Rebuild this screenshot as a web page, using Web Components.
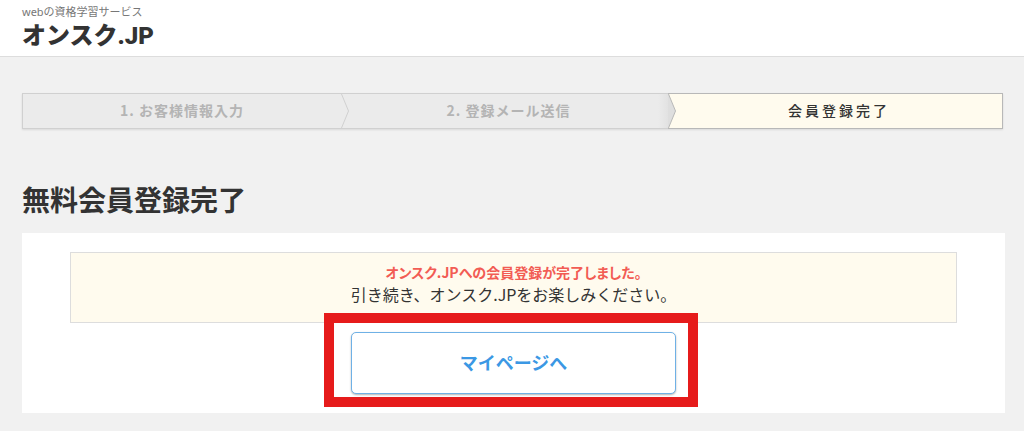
<!DOCTYPE html>
<html lang="ja">
<head>
<meta charset="utf-8">
<meta name="viewport" content="width=device-width, initial-scale=1">
<title>無料会員登録完了 | オンスク.JP</title>
<style>
    body {
        margin: 0;
        background: #f1f1f1;
        color: #333;
        font-family: "Noto Sans CJK JP", "Noto Sans", sans-serif;
        font-size: 16px;
        line-height: 22px;
    }
    main {
        padding: 36px 19px 18px 22px;
    }
    h1 {
        margin: 50px 0 14px;
        font-size: 28px;
        line-height: 40px;
        font-weight: 700;
    }
</style>
</head>
<body>
<site-header href="#top">
    <span slot="tagline">webの資格学習サービス</span>
    オンスク.JP
</site-header>
<main>
    <step-list>
        <step-item next="done">1. お客様情報入力</step-item>
        <step-item next="active">2. 登録メール送信</step-item>
        <step-item state="active">会員登録完了</step-item>
    </step-list>
    <h1>無料会員登録完了</h1>
    <content-panel>
        <notice-box>
            <span slot="title">オンスク.JPへの会員登録が完了しました。</span>
            引き続き、オンスク.JPをお楽しみください。
        </notice-box>
        <link-button href="#mypage" marked>マイページへ</link-button>
    </content-panel>
</main>

<script>
class SiteHeader extends HTMLElement {
    constructor() {
        super();
        this.attachShadow({ mode: 'open' });
    }

    connectedCallback() {
        this.shadowRoot.innerHTML = `
        <style>
            :host {
                display: block;
                background: #fff;
                border-bottom: 1px solid #ddd;
            }
            header {
                padding: 4px 22px 6px;
            }
            .tagline {
                font-family: "Noto Sans", "Noto Sans CJK JP", sans-serif;
                font-size: 11px;
                line-height: 16px;
                color: #777;
            }
            .logo {
                display: block;
                width: fit-content;
                padding-top: 2px;
                font-family: Roboto, "Noto Sans CJK JP", sans-serif;
                font-size: 24px;
                line-height: 28px;
                font-weight: 900;
                color: #333;
                text-decoration: none;
            }
        </style>
        <header>
            <div class="tagline"><slot name="tagline"></slot></div>
            <a class="logo" href="${this.getAttribute('href') || '#'}"><slot></slot></a>
        </header>`;
    }
}

class StepList extends HTMLElement {
    constructor() {
        super();
        this.attachShadow({ mode: 'open' });
    }

    connectedCallback() {
        this.setAttribute('role', 'list');
        this.shadowRoot.innerHTML = `
        <style>
            :host {
                display: grid;
                grid-template-columns: repeat(3, 1fr);
                margin-right: 2px;
                box-shadow: 0 1px 2px rgba(0, 0, 0, 0.1);
            }
        </style>
        <slot></slot>`;
    }
}

class StepItem extends HTMLElement {
    constructor() {
        super();
        this.attachShadow({ mode: 'open' });
    }

    connectedCallback() {
        this.setAttribute('role', 'listitem');
        this.shadowRoot.innerHTML = `
        <style>
            :host {
                display: flex;
                height: 36px;
                background: #ebebeb;
                color: #b4b4b4;
                font-size: 14px;
                line-height: 20px;
                font-weight: 700;
                letter-spacing: 1px;
            }
            :host([state="active"]) {
                background: #fffbee;
                color: #333;
                font-weight: 500;
                letter-spacing: 3px;
            }
            .label {
                flex: 1;
                display: flex;
                justify-content: center;
                padding-top: 6px;
                border: solid #d0d0d0;
                border-width: 1px 0;
            }
            :host(:first-child) .label {
                border-left-width: 1px;
            }
            :host([state="active"]) .label {
                border-color: #b8b8b8;
                border-right-width: 1px;
            }
            :host([next="active"]) .label {
                background: linear-gradient(to left, #e2e2e2, #ebebeb 10px);
            }
            svg {
                display: block;
                width: 8px;
                height: 36px;
            }
        </style>
        <div class="label"><slot></slot></div>
        ${this.arrow()}`;
    }

    arrow() {
        const next = this.getAttribute('next');
        if (!next) return '';
        const active = next === 'active';
        const line = active ? '#b8b8b8' : '#d0d0d0';
        return `
        <svg viewBox="0 0 8 36" aria-hidden="true">
            <rect width="8" height="36" fill="${active ? '#fffbee' : '#ebebeb'}"/>
            <path d="M0 0 L7.5 18 L0 36Z" fill="${active ? '#dedede' : '#ebebeb'}"/>
            <path d="M0 0.5H8M0 35.5H8M0.5 1L7.5 18L0.5 35" fill="none" stroke="${line}"/>
        </svg>`;
    }
}

class ContentPanel extends HTMLElement {
    constructor() {
        super();
        this.attachShadow({ mode: 'open' });
    }

    connectedCallback() {
        this.shadowRoot.innerHTML = `
        <style>
            :host {
                display: flex;
                flex-direction: column;
                align-items: center;
                gap: 9px;
                padding: 19px 48px;
                background: #fff;
            }
        </style>
        <slot></slot>`;
    }
}

class NoticeBox extends HTMLElement {
    constructor() {
        super();
        this.attachShadow({ mode: 'open' });
    }

    connectedCallback() {
        this.shadowRoot.innerHTML = `
        <style>
            :host {
                display: block;
                align-self: stretch;
                box-sizing: border-box;
                padding: 9px 16px 17px;
                border: 1px solid #ddd;
                background: #fffbee;
                text-align: center;
            }
            p {
                margin: 0;
            }
            .title {
                font-size: 14px;
                line-height: 21px;
                font-weight: 700;
                font-feature-settings: "palt";
                color: #f25c54;
            }
        </style>
        <p class="title"><slot name="title"></slot></p>
        <p><slot></slot></p>`;
    }
}

class LinkButton extends HTMLElement {
    constructor() {
        super();
        this.attachShadow({ mode: 'open' });
    }

    connectedCallback() {
        this.shadowRoot.innerHTML = `
        <style>
            :host {
                display: block;
                position: relative;
                width: 325px;
                max-width: 100%;
            }
            a {
                display: block;
                padding: 18px 16px 20px;
                border: 1px solid #6fb1e6;
                border-radius: 5px;
                background: #fff;
                box-shadow: 0 1px 2px rgba(0, 0, 0, 0.3);
                color: #3b98e4;
                font-size: 18px;
                font-weight: 700;
                text-align: center;
                text-decoration: none;
            }
            /* red marker frame drawn over the button */
            :host([marked])::after {
                content: "";
                position: absolute;
                inset: -19px -22px -13px -27px;
                border: 10px solid #e61b1b;
                pointer-events: none;
            }
        </style>
        <a href="${this.getAttribute('href') || '#'}"><slot></slot></a>`;
    }
}

customElements.define('site-header', SiteHeader);
customElements.define('step-list', StepList);
customElements.define('step-item', StepItem);
customElements.define('content-panel', ContentPanel);
customElements.define('notice-box', NoticeBox);
customElements.define('link-button', LinkButton);
</script>
</body>
</html>
